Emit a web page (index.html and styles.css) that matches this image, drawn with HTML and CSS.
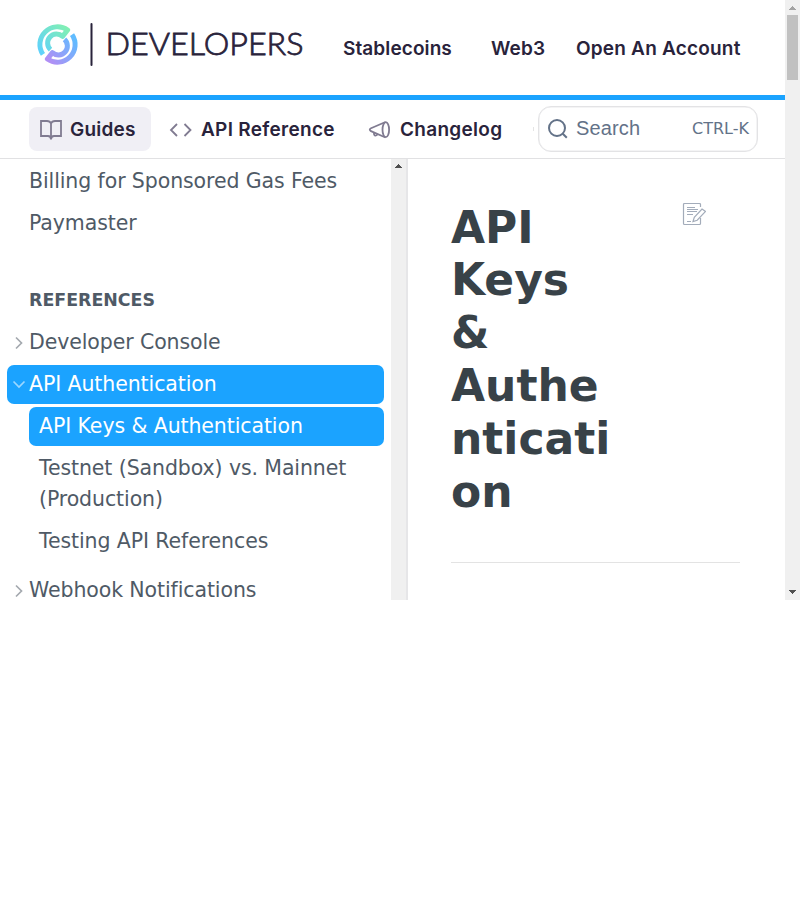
FILE: index.html
```html
<!DOCTYPE html>
<html lang="en">
<head>
<meta charset="utf-8">
<title>API Keys &amp; Authentication</title>
<link rel="stylesheet" href="styles.css">
</head>
<body>
<div class="frame">
  <div class="page">
    <header class="top">
      <svg class="logo" width="276" height="52" viewBox="0 0 276 52">
        <defs>
          <linearGradient id="a" gradientUnits="userSpaceOnUse" x1="12" y1="-16" x2="-16" y2="10"><stop offset="0" stop-color="#80efb4"/><stop offset="1" stop-color="#60d2fa"/></linearGradient>
          <linearGradient id="b" gradientUnits="userSpaceOnUse" x1="17" y1="-8" x2="-10" y2="16"><stop offset="0" stop-color="#60bcff"/><stop offset="1" stop-color="#b08ff5"/></linearGradient>
        </defs>
        <g transform="translate(21.5 26.5) scale(.92)" fill="none" stroke-width="5.4" stroke-linejoin="round">
          <path stroke="url(#a)" d="M-15.800 10.800A19.200 19.200 0 0 1 11 -15.800L5.500 -8.800A9.200 9.200 0 0 0 -7.600 5.500"/>
          <path stroke="url(#b)" d="M15.800 -10.800A19.200 19.200 0 0 1 -11 15.800L-5.500 8.800A9.200 9.200 0 0 0 7.600 -5.500"/>
        </g>
        <path d="M55.5 6v41" stroke="#29233b" stroke-width="2" stroke-linecap="round"/>
        <text class="wordmark" x="69.5" y="37.3" textLength="198" lengthAdjust="spacingAndGlyphs">DEVELOPERS</text>
      </svg>
      <nav class="links"><a class="l1">Stablecoins</a><a class="l2">Web3</a><a class="l3">Open An Account</a></nav>
    </header>
    <div class="bar">
      <a class="tab active t1"><svg width="24" height="22" viewBox="0 0 24 22"><path d="M12 4.500Q11 2 8 2H2V17H9Q12 17 12 20.500Q12 17 15 17H22V2H16Q13 2 12 4.500V19"/></svg><span>Guides</span></a>
      <a class="tab t2"><svg width="24" height="22" viewBox="0 0 24 22"><path d="M8 5L2 11l6 6M15.500 5l6 6l-6 6"/></svg><span>API Reference</span></a>
      <a class="tab t3"><svg width="24" height="22" viewBox="0 0 24 22"><path d="M17.500 3L3 9.200Q0.500 10.500 3 12.200L17.500 18.500"/><ellipse cx="17.800" cy="10.700" rx="3.300" ry="7.500"/><path d="M6 13.700V15Q6.500 17.200 8.500 16.300L9.700 15.200"/></svg><span>Changelog</span></a>
      <i class="more"></i>
      <div class="search"><svg width="22" height="22" viewBox="0 0 22 22"><circle cx="10" cy="10" r="8"/><path d="M15.8 15.8l4 4"/></svg><span class="ph">Search</span><span class="key">CTRL-K</span></div>
    </div>
    <div class="body">
      <aside class="side">
        <a class="item">Billing for Sponsored Gas Fees</a>
        <a class="item">Paymaster</a>
        <h2>REFERENCES</h2>
        <a class="item"><svg class="chev" width="14" height="14" viewBox="0 0 14 14"><path d="M4 1.500l5.500 5.500l-5.500 5.500"/></svg>Developer Console</a>
        <a class="item on"><svg class="chev" width="14" height="14" viewBox="0 0 14 14"><path d="M1.500 3.500l5.500 5.500l5.500-5.500"/></svg>API Authentication</a>
        <div class="sub">
          <a class="item on">API Keys &amp; Authentication</a>
          <a class="item">Testnet (Sandbox) vs. Mainnet (Production)</a>
          <a class="item">Testing API References</a>
        </div>
        <a class="item"><svg class="chev" width="14" height="14" viewBox="0 0 14 14"><path d="M4 1.500l5.500 5.500l-5.500 5.500"/></svg>Webhook Notifications</a>
      </aside>
      <div class="sidescroll"><svg width="15" height="15" viewBox="0 0 15 15" shape-rendering="crispEdges"><path d="M4 9L7.500 5L11 9z"/></svg></div>
      <main class="main">
        <div class="title">
          <h1>API Keys &amp; Authentication</h1>
          <svg class="edit" width="24" height="24" viewBox="0 0 24 24"><path d="M18.500 5V2.500Q18.500 1.500 17.500 1.500H2.500Q1.500 1.500 1.500 2.500V21.500Q1.500 22.500 2.500 22.500H17.500Q18.500 22.500 18.500 21.500V16"/><path d="M5 5.500H13M5 7.500H16M5 9.500H15M5 12.500H11M5 19.500H9"/><path fill="#fff" d="M11 19.500l1.300-4.200L20 7l3.500 2.500l-8.300 8.700z"/></svg>
        </div>
      </main>
    </div>
  </div>
  <div class="scroll">
    <svg width="15" height="15" viewBox="0 0 15 15" shape-rendering="crispEdges"><path fill="#a3a3a3" d="M4 10L7.500 6L11 10z"/></svg>
    <i class="thumb"></i>
    <svg class="down" width="15" height="15" viewBox="0 0 15 15" shape-rendering="crispEdges"><path d="M4 5L7.500 9L11 5z"/></svg>
  </div>
</div>
</body>
</html>
```
FILE: styles.css
```css
* { box-sizing: border-box; }
body { margin: 0; background: #fff; font-family: "DejaVu Sans", sans-serif; }
.frame { display: flex; width: 800px; height: 600px; overflow: hidden; }
.page { width: 785px; display: flex; flex-direction: column; }
.top { height: 100px; flex: none; border-bottom: 5px solid #1ba3ff; display: flex; padding-left: 36px; }
.logo { margin-top: 18px; flex: none; }
.wordmark { font: 300 31px Lato, sans-serif; fill: #29233b; stroke: #29233b; stroke-width: 0.8; }
.links { display: flex; padding: 37px 0 0 31px; }
.links a, .tab { font: 600 19px/24px Inter, sans-serif; color: #29233b; white-space: nowrap; letter-spacing: 0.2px; }
.links .l1 { width: 148px; letter-spacing: 0.1px; }
.l2 { width: 85px; }
.bar { height: 59px; flex: none; display: flex; border-bottom: 1px solid #e1e1e3; padding: 6px 0 0 29px; }
.tab { height: 44px; margin-top: 1px; border-radius: 8px; display: flex; align-items: center; gap: 7px; padding-left: 10px; flex: none; }
.tab svg { fill: none; stroke: #807b91; stroke-width: 1.8; margin-top: 1px; }
.tab span { margin-top: 2px; }
.active { background: #f0eff5; }
.t1 { width: 122px; }
.t2 { width: 199px; margin-left: 7px; gap: 8px; padding-left: 11px; letter-spacing: 0.3px; }
.t3 { width: 160px; margin-left: 1px; padding-left: 10px; gap: 8px; letter-spacing: 0.3px; }
.more { width: 1px; height: 4px; margin: 21px 3px 0 15px; background: #e4e4e4; }
.search { width: 220px; height: 46px; border: 1px solid #e3e3e5; box-shadow: inset 0 0 0 0.5px #e9e9eb; border-radius: 13px; display: flex; align-items: center; padding: 0 8px 1px 8px; color: #637288; margin-left: auto; margin-right: 27px; }
.search svg { fill: none; stroke: #637288; stroke-width: 2; }
.ph { font: 20px "Liberation Sans", sans-serif; margin-left: 7px; letter-spacing: 0.15px; }
.key { font-size: 16px; margin-left: auto; }
.body { flex: 1; min-height: 0; display: flex; }
.side { width: 391px; padding: 3px 7px 0; overflow: hidden; flex: none; color: #4f5a66; font-size: 20.500px; letter-spacing: -0.100px; line-height: 31px; }
.item { display: block; position: relative; padding: 4px 8px 4px 22px; margin-bottom: 3px; border-radius: 7px; }
.sub { margin: 0 0 10px 22px; }
.sub .item { padding-left: 10px; }
.on { background: #1ba3ff; color: #fff; }
.side h2 { font-size: 17.400px; letter-spacing: 0; line-height: 31px; margin: 42px 0 7px 22px; }
.chev { position: absolute; left: 5px; top: 13px; fill: none; stroke: #a4a9af; stroke-width: 1.700; }
.on .chev { stroke: #9cd7ff; }
.sidescroll { width: 17px; background: #f0f0f0; border-right: 2px solid #e6e6e8; flex: none; }
.sidescroll svg, .scroll svg { display: block; fill: #505050; }
.main { flex: 1; padding: 42px 45px 0 43px; }
.title { height: 362px; border-bottom: 1px solid #e3e3e3; display: flex; justify-content: space-between; padding-right: 34px; }
h1 { margin: 0.600px 0 0; width: 164px; font-size: 44px; line-height: 52.800px; color: #384248; overflow-wrap: anywhere; }
.edit { fill: none; stroke: #a3acba; stroke-width: 1.200; margin-top: 1px; }
.scroll { width: 15px; background: #f0f0f0; display: flex; flex-direction: column; }
.thumb { width: 11px; height: 65px; margin-left: 2px; background: #c1c1c1; }
.down { margin-top: auto; }
```
